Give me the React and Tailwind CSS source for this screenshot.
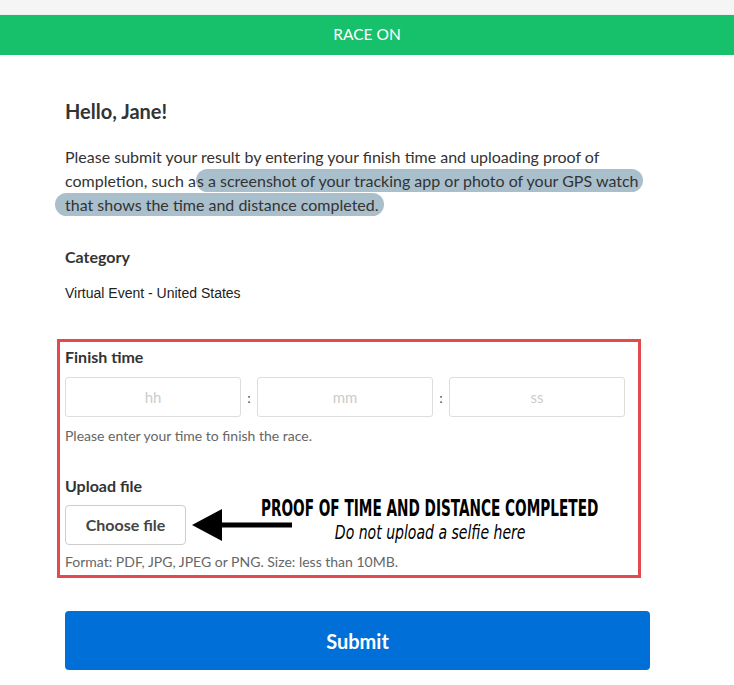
export default function App() {
  const sans = { fontFamily: '"Lato", "Liberation Sans", sans-serif' };
  const cond = { fontFamily: '"DejaVu Sans Condensed", "DejaVu Sans", sans-serif' };
  return (
    <div className="min-h-[685px] bg-white" style={sans}>
      <div className="h-[15px] bg-[#f5f5f5] border-b border-[#ececec]" />
      <div className="h-[40px] bg-[#17c06b] flex items-center justify-center text-white text-[15.5px]">
        RACE ON
      </div>
      <div className="ml-[65px] w-[585px]">
        <h1 className="mt-[44px] text-[20px] font-bold text-[#333] leading-[24px]">Hello, Jane!</h1>
        <p className="mt-[22px] text-[16px] leading-[24px] text-[#333] whitespace-nowrap">
          Please submit your result by entering your finish time and uploading proof of
          <br />
          completion, such a
          <span className="bg-[#a9bfcc] rounded-full pl-[1px] pr-[4px] py-[2px]">
            s a screenshot of your tracking app or photo of your GPS watch
          </span>
          <br />
          <span className="bg-[#a9bfcc] rounded-full pl-[10px] -ml-[10px] pr-[5px] py-[2px]">
            that shows the time and distance completed.
          </span>
        </p>
        <div className="mt-[28px] text-[16px] font-bold text-[#333] leading-[24px]">Category</div>
        <div className="mt-[14px] text-[14px] text-[#222] leading-[20px]" style={{ fontFamily: '"Liberation Sans", Arial, sans-serif' }}>
          Virtual Event - United States
        </div>

        <div className="mt-[36px] -ml-[8px] w-[584px] border-[3px] border-[#e24a4d] px-[5px] pt-[5px] pb-[4px]">
          <div className="text-[16px] font-bold text-[#333] leading-[20px]">Finish time</div>
          <div className="mt-[10px] flex items-center">
            <div className="w-[176px] h-[40px] border border-[#ddd] rounded-[3px] flex items-center justify-center text-[15px] text-[#ccc]">hh</div>
            <div className="w-[16px] text-center text-[#555] text-[14px]">:</div>
            <div className="w-[176px] h-[40px] border border-[#ddd] rounded-[3px] flex items-center justify-center text-[15px] text-[#ccc]">mm</div>
            <div className="w-[16px] text-center text-[#555] text-[14px]">:</div>
            <div className="w-[176px] h-[40px] border border-[#ddd] rounded-[3px] flex items-center justify-center text-[15px] text-[#ccc]">ss</div>
          </div>
          <div className="mt-[10px] text-[14px] text-[#666] leading-[18px]">Please enter your time to finish the race.</div>

          <div className="mt-[31px] text-[16px] font-bold text-[#333] leading-[20px]">Upload file</div>
          <div className="mt-[9px] flex items-center h-[40px]">
            <div className="w-[121px] h-[40px] shrink-0 border border-[#ccc] rounded-[4px] flex items-center justify-center text-[16px] font-bold text-[#444]">
              Choose file
            </div>
            <svg width="102" height="34" viewBox="0 0 102 34" className="ml-[5px] shrink-0">
              <polygon points="1,17 31,1 31,33" fill="#000" />
              <rect x="30" y="14.5" width="71" height="5" fill="#000" />
            </svg>
            <div className="w-[274px] shrink-0 flex flex-col items-center mb-[10px] whitespace-nowrap" style={cond}>
              <div className="text-[23px] font-bold text-black leading-[24px] [transform:scaleX(0.66)]">
                PROOF OF TIME AND DISTANCE COMPLETED
              </div>
              <div className="text-[20px] italic text-black leading-[24px] [transform:scaleX(0.78)]">
                Do not upload a selfie here
              </div>
            </div>
          </div>
          <div className="mt-[8px] text-[14px] text-[#666] leading-[18px]">Format: PDF, JPG, JPEG or PNG. Size: less than 10MB.</div>
        </div>

        <button className="mt-[33px] w-[585px] h-[59px] bg-[#006fd8] rounded-[4px] text-white text-[20px] font-bold">
          Submit
        </button>
      </div>
    </div>
  );
}
